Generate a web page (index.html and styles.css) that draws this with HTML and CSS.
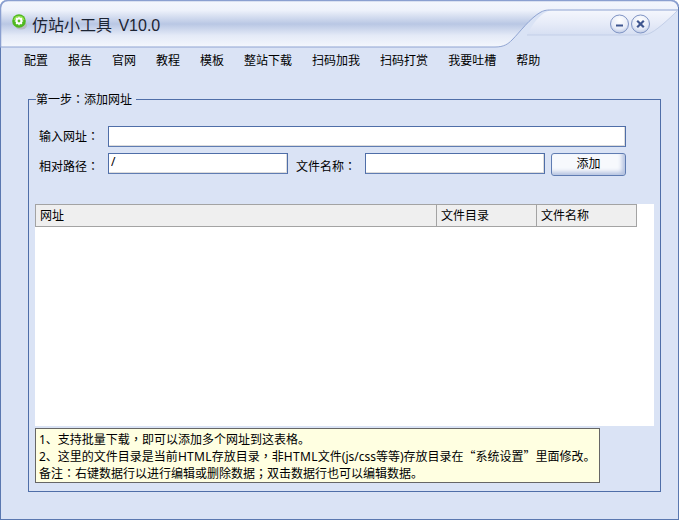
FILE: index.html
```html
<!DOCTYPE html>
<html lang="zh-CN">
<head>
<meta charset="utf-8">
<title>仿站小工具</title>
<link rel="stylesheet" href="styles.css">
</head>
<body>
<div class="window">
  <header class="titlebar">
    <svg class="title-bg" width="679" height="48" viewBox="0 0 679 48">
      <defs>
        <linearGradient id="tg" x1="0" y1="0" x2="0" y2="1">
          <stop offset="0" stop-color="#f3f6fd"/>
          <stop offset="0.2" stop-color="#eef2fb"/>
          <stop offset="0.5" stop-color="#b9c7e4"/>
          <stop offset="0.75" stop-color="#e4eaf7"/>
          <stop offset="1" stop-color="#f4f7fd"/>
        </linearGradient>
        <linearGradient id="tr" x1="0" y1="0" x2="0" y2="1">
          <stop offset="0" stop-color="#f5f7fd"/>
          <stop offset="0.55" stop-color="#e6ebf8"/>
          <stop offset="1" stop-color="#d6dff2"/>
        </linearGradient>
        <radialGradient id="btn" cx="0.5" cy="0.3" r="0.8">
          <stop offset="0" stop-color="#ffffff"/>
          <stop offset="0.6" stop-color="#e6ebf7"/>
          <stop offset="1" stop-color="#a9b9dc"/>
        </radialGradient>
      </defs>
      <path d="M0 47V8Q1 1 8 1H671Q677 1 678 7V10H553C547 10 545 10 541 12C530 18 520 32 512 40C508 44 504 47 495 47Z" fill="url(#tg)"/>
      <path d="M527 35C532 25 540 12 552 10H678C668 20 655 32 648 34Q645 35 640 35Z" fill="url(#tr)"/>
      <path d="M0 47H495C504 47 508 44 512 40C520 32 530 18 541 12C545 10 547 10 553 10H678" fill="none" stroke="#8fa4d2" stroke-width="1"/>
      <path d="M527 35H640Q645 35 648 34C655 32 668 20 678 10" fill="none" stroke="#c3cfe8" stroke-width="1"/>
      <path d="M0.5 47V8Q1 1 8 0.5H671Q677 1 678.5 7" fill="none" stroke="#8a9fd0" stroke-width="1.5"/>
      <circle cx="619.5" cy="24" r="9" fill="url(#btn)" stroke="#7f94c4"/>
      <circle cx="640.5" cy="24" r="9" fill="url(#btn)" stroke="#7f94c4"/>
      <path d="M616 25.5H623" stroke="#3f568f" stroke-width="2"/>
      <path d="M637.2 20.7L643.8 27.3M643.8 20.7L637.2 27.3" stroke="#3f568f" stroke-width="2.2"/>
    </svg>
    <svg class="app-icon" width="16" height="16" viewBox="0 0 16 16">
      <ellipse cx="9" cy="11.5" rx="6" ry="4" fill="#b8bcc4"/>
      <circle cx="7" cy="7" r="6.8" fill="#4fb81f"/>
      <path d="M1.5 6A5.6 5.2 0 0 1 12.5 6Z" fill="#93e04f"/>
      <circle cx="7" cy="7" r="3.4" fill="#ffffff"/>
      <path d="M7 2.8V11.2M2.8 7H11.2M4 4L10 10M10 4L4 10" stroke="#ffffff" stroke-width="1.1"/>
      <circle cx="7" cy="7" r="1.4" fill="#5abf26"/>
    </svg>
    <h1 class="app-title">仿站小工具 V10.0</h1>
  </header>
  <nav class="menu">
    <span>配置</span><span>报告</span><span>官网</span><span>教程</span><span>模板</span><span>整站下载</span><span>扫码加我</span><span>扫码打赏</span><span>我要吐槽</span><span>帮助</span>
  </nav>
  <fieldset class="group">
    <legend>第一步<span class="tc" lang="zh-TW">：</span>添加网址</legend>
    <div class="row first">
      <label class="lbl">输入网址<span class="tc" lang="zh-TW">：</span></label>
      <input class="field wide" type="text">
    </div>
    <div class="row second">
      <label class="lbl">相对路径<span class="tc" lang="zh-TW">：</span></label>
      <input class="field path" type="text" value="/">
      <label class="lbl2">文件名称<span class="tc" lang="zh-TW">：</span></label>
      <input class="field name" type="text">
      <button class="add" type="button">添加</button>
    </div>
    <div class="table">
      <div class="thead">
        <div class="th c1">网址</div>
        <div class="th c2">文件目录</div>
        <div class="th c3">文件名称</div>
      </div>
    </div>
    <div class="notes">
      <p>1、支持批量下载<span class="tc" lang="zh-TW">，</span>即可以添加多个网址到这表格。</p>
      <p>2、这里的文件目录是当前<span class="caps">HTML</span>存放目录<span class="tc" lang="zh-TW">，</span>非<span class="caps">HTML</span>文件(js/css等等)存放目录在<span class="qo">“</span>系统设置<span class="qc">”</span>里面修改。</p>
      <p>备注<span class="tc" lang="zh-TW">：</span>右键数据行以进行编辑或删除数据<span class="tc" lang="zh-TW">；</span>双击数据行也可以编辑数据。</p>
    </div>
  </fieldset>
</div>
</body>
</html>
```
FILE: styles.css
```css
* { box-sizing: border-box; }
html, body { margin: 0; padding: 0; }
body {
  width: 679px;
  height: 520px;
  overflow: hidden;
  font-family: "Noto Sans", "Noto Sans CJK SC", sans-serif;
  font-size: 12px;
  color: #000;
}
.window {
  width: 679px;
  height: 520px;
  background: #dae3f5;
  border-left: 1px solid #5a78b0;
  border-right: 1px solid #5a78b0;
  border-bottom: 1px solid #5a78b0;
  border-radius: 7px 7px 0 0;
  position: relative;
}
.titlebar {
  height: 47px;
  display: flex;
  align-items: center;
  padding: 4px 0 0 11px;
}
.title-bg { position: absolute; left: -1px; top: 0; }
.app-icon { position: relative; margin-right: 4px; margin-top: -7px; }
.app-title {
  position: relative;
  margin: 0;
  font-family: "Liberation Sans", "Noto Sans CJK SC", sans-serif;
  font-size: 16px;
  font-weight: 400;
  word-spacing: 2px;
  color: #1c2433;
  line-height: 20px;
  white-space: nowrap;
}
.menu {
  display: flex;
  gap: 20px;
  height: 26px;
  padding: 2px 0 0 23px;
  align-items: center;
  font-size: 12px;
}
.menu span { line-height: 16px; white-space: nowrap; }
.tc { font-family: "Noto Sans CJK TC", sans-serif; }
.caps { letter-spacing: 0.3px; }
.qo, .qc { display: inline-block; width: 12px; font-family: "Noto Sans CJK SC", sans-serif; }
.qo { text-align: right; }
.qc { text-align: left; }
.group {
  margin: 18px 0 0 27px;
  width: 633px;
  height: 401px;
  padding: 0 0 0 6px;
  border: 1px solid #4f6ea8;
  position: relative;
  min-width: 0;
}
.group legend {
  margin-left: 1px;
  padding: 0 4px 0 0;
  font-size: 12px;
  line-height: 16px;
  height: 16px;
}
.row { display: flex; align-items: flex-start; }
.row.first { margin-top: 19px; height: 21px; }
.row.second { margin-top: 6px; height: 23px; }
.lbl { width: 73px; height: 21px; padding-left: 4px; line-height: 19px; white-space: nowrap; }
.second .lbl { line-height: 26px; }
.lbl2 { width: 69px; height: 23px; margin-left: 8px; line-height: 26px; white-space: nowrap; }
.field {
  height: 21px;
  padding: 0 2px;
  margin: 0;
  border: 1px solid #4f6ea8;
  border-bottom-color: #5f7cb2;
  background: #fff;
  font: inherit;
  box-shadow: inset -1px -1px 0 #dcdcdc;
  outline: 0;
}
.field.wide { width: 518px; }
.field.path { width: 180px; padding-bottom: 5px; }
.field.name { width: 180px; }
.add {
  width: 75px;
  height: 23px;
  margin: 0 0 0 6px;
  padding: 0 0 4px;
  font: inherit;
  color: #000;
  border: 1px solid #5f7cb2;
  border-radius: 3px;
  background: #f7f9fd;
  box-shadow: inset -3px -3px 4px #b4c2e0;
}
.table {
  margin-top: 28px;
  width: 619px;
  height: 222px;
  background: #fff;
}
.thead {
  display: flex;
  width: 602px;
  height: 23px;
  background: #efefef;
  border: 1px solid #a3a3a3;
}
.th { line-height: 21px; padding-left: 4px; white-space: nowrap; }
.c1 { width: 400px; }
.c2 { width: 100px; border-left: 1px solid #a3a3a3; }
.c3 { flex: 1; border-left: 1px solid #a3a3a3; }
.notes {
  margin-top: 2px;
  width: 565px;
  height: 55px;
  padding: 1px 0 0 3px;
  background: #ffffe1;
  border: 1px solid #666;
}
.notes p { margin: 0; height: 17px; line-height: 17px; white-space: nowrap; }
```
